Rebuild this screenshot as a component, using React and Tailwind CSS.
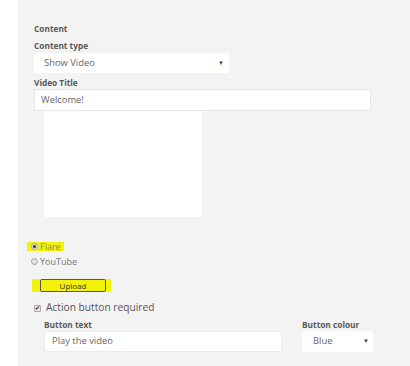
import React from "react";

const font = { fontFamily: '"Open Sans", "Liberation Sans", sans-serif' };

const Label = ({ children, className = "" }) => (
  <div className={`text-[8.3px] font-bold leading-[12px] text-[#5a5a5a] ${className}`}>
    {children}
  </div>
);

const Caret = () => <span className="text-[6px] text-[#444]">▼</span>;

const Radio = ({ checked }) => (
  <span className="mr-[2px] inline-flex h-[7px] w-[7px] items-center justify-center rounded-full border border-[#a5a5a5] bg-[#e2e2e2]">
    {checked && <span className="h-[3px] w-[3px] rounded-full bg-[#333]" />}
  </span>
);

const App = () => {
  return (
    <div className="flex h-[366px] w-[410px] bg-white" style={font}>
      <div className="ml-[18px] flex-1 bg-[#f3f3f3] pl-[16px] pt-[23px]">
        <Label>Content</Label>
        <Label className="mt-[5px]">Content type</Label>
        <div className="mt-[1px] flex h-[20px] w-[195px] items-center justify-between bg-white pl-[10px] pr-[5px] text-[9.4px] text-[#666]">
          <span>Show Video</span>
          <Caret />
        </div>
        <Label className="mt-[4px]">Video Title</Label>
        <div className="flex h-[22px] w-[337px] items-center border border-[#e6e6e6] bg-white pl-[6px] text-[9.4px] text-[#666]">
          Welcome!
        </div>
        <div className="ml-[10px] h-[106px] w-[158px] bg-white" />

        <div className="mt-[24px] flex h-[11px] items-center">
          <span className="-ml-[7px] flex h-[9px] items-center bg-[#f2f20a] pl-[4px] pr-[3px] text-[9px] text-[#888]">
            <Radio checked />
            Flare
          </span>
        </div>
        <div className="mt-[4px] flex h-[11px] items-center text-[9px] text-[#777]">
          <span className="-ml-[3px] flex items-center">
            <Radio />
            YouTube
          </span>
        </div>

        <div className="mt-[12px] flex h-[13px] w-[79px] -ml-[2px] items-center bg-[#f2f20a] pl-[8px]">
          <div className="flex h-[13px] w-[66px] items-center justify-center rounded-[2px] border border-[#555] text-[8px] text-[#333]">
            Upload
          </div>
        </div>

        <div className="mt-[9px] flex h-[14px] items-center text-[10.2px] text-[#555]">
          <span className="mr-[5px] inline-flex h-[7px] w-[7px] items-center justify-center rounded-[1px] border border-[#aaa] bg-[#e8e8e8] text-[6px] leading-none text-[#222]">
            ✔
          </span>
          Action button required
        </div>

        <div className="mt-[4px] ml-[10px] flex">
          <div>
            <Label>Button text</Label>
            <div className="flex h-[21px] w-[238px] items-center border border-[#ececec] bg-white pl-[7px] text-[9.4px] text-[#666]">
              Play the video
            </div>
          </div>
          <div className="ml-[20px]">
            <Label>Button colour</Label>
            <div className="flex h-[21px] w-[71px] items-center justify-between bg-white pl-[11px] pr-[4px] text-[9.4px] text-[#666]">
              <span>Blue</span>
              <Caret />
            </div>
          </div>
        </div>
      </div>
    </div>
  );
};

export default App;
